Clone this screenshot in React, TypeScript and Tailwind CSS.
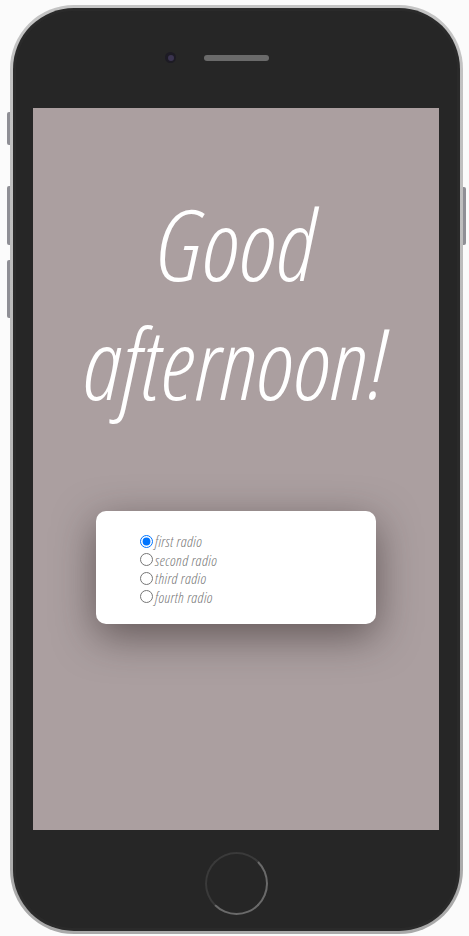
const radios = ["first radio", "second radio", "third radio", "fourth radio"];

export default function App() {
  return (
    <div className="w-[469px] h-[936px] bg-[#fbfbfb] pt-[5px] pl-[10px]">
      <div className="relative w-[453px] h-[929px]">
        {/* side buttons */}
        <div className="absolute left-[-3px] top-[107px] w-[3px] h-[33px] rounded-l-[2px] bg-[#8f8f95]" />
        <div className="absolute left-[-3px] top-[181px] w-[3px] h-[59px] rounded-l-[2px] bg-[#8f8f95]" />
        <div className="absolute left-[-3px] top-[255px] w-[3px] h-[58px] rounded-l-[2px] bg-[#8f8f95]" />
        <div className="absolute right-[-3px] top-[182px] w-[3px] h-[58px] rounded-r-[2px] bg-[#8f8f95]" />
        <div className="w-full h-full rounded-[64px] bg-gradient-to-b from-[#c4c4c4] to-[#a9a9a9] p-[3px]">
          <div className="w-full h-full rounded-[61px] bg-[#2a2a2a] p-[3px]">
            <div className="w-full h-full rounded-[58px] bg-[#262626] flex flex-col items-center">
              <div className="h-[97px] w-full flex items-center justify-center gap-[28px] pb-[4px]">
                <div className="w-[11px] h-[11px] rounded-full bg-[#1d1b24] flex items-center justify-center">
                  <div className="w-[6px] h-[6px] rounded-full bg-[#3b3450]" />
                </div>
                <div className="w-[65px] h-[6px] rounded-full bg-[#4a4a4a] bg-[radial-gradient(#6a6a6a_0.8px,transparent_0.9px)] bg-[length:2px_2px]" />
                <div className="w-[11px] h-[6px]" />
              </div>
              <div className="w-[406px] h-[722px] mr-[1px] bg-[#ab9fa0] flex flex-col items-center">
                <h1 className="mt-[76px] text-white text-center font-['Open_Sans'] [font-stretch:75%] font-light italic text-[98px] leading-[119px]">
                  Good
                  <br />
                  afternoon!
                </h1>
                <div className="mt-[89px] w-[280px] h-[113px] rounded-[10px] bg-white shadow-[0_12px_40px_rgba(40,30,30,0.55)] pl-[44px] pt-[21px] flex flex-col">
                  {radios.map((r, i) => (
                    <label key={r} className="flex items-center gap-[2px] text-[#767676] font-['Open_Sans'] [font-stretch:75%] font-light italic text-[15px] tracking-[0.4px] leading-[18.5px]">
                      <input type="radio" name="r" defaultChecked={i === 0} className="w-[13px] h-[13px] m-0" />
                      <span>{r}</span>
                    </label>
                  ))}
                </div>
              </div>
              <div className="flex-1 flex items-center justify-center pt-[8px]">
                <div className="w-[63px] h-[63px] rounded-full border-2 border-t-[#3a3a3a] border-l-[#3a3a3a] border-r-[#6a6a6a] border-b-[#6a6a6a]" />
              </div>
            </div>
          </div>
        </div>
      </div>
    </div>
  );
}
